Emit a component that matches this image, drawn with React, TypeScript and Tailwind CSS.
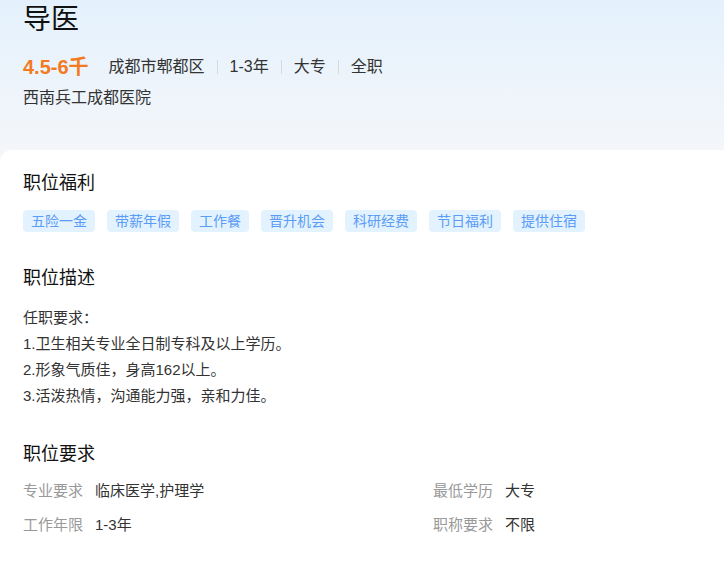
const font = { fontFamily: '"Liberation Sans", Arial, "Noto Sans CJK SC", sans-serif' };

const tags = ['五险一金', '带薪年假', '工作餐', '晋升机会', '科研经费', '节日福利', '提供住宿'];

const meta = ['成都市郫都区', '1-3年', '大专', '全职'];

function Heading({ children }: { children: React.ReactNode }) {
  return <h2 className="text-[18px] leading-[26px] text-[#111] font-normal">{children}</h2>;
}

function Field({ label, value }: { label: string; value: string }) {
  return (
    <div className="flex items-center gap-[12px] text-[15px] leading-[20px]">
      <span className="text-[#999]">{label}</span>
      <span className="text-[#333]">{value}</span>
    </div>
  );
}

export default function App() {
  return (
    <div className="min-h-[571px] w-full bg-white" style={font}>
      <div className="bg-gradient-to-b from-[#e4f1fd] to-[#f4f6f9]">
        <div className="h-[150px] px-[23px] pt-[2px]">
          <h1 className="text-[28px] leading-[36px] text-[#111] font-normal">导医</h1>
          <div className="mt-[15px] flex items-center h-[28px]">
            <span className="text-[20px] font-bold text-[#f27b1f] mr-[20px]">4.5-6千</span>
            {meta.map((m, i) => (
              <div key={m} className="flex items-center">
                {i > 0 && <span className="w-px h-[14px] bg-[#d6d9de] mx-[12px]" />}
                <span className="text-[16px] text-[#333]">{m}</span>
              </div>
            ))}
          </div>
          <div className="mt-[5px] text-[16px] leading-[24px] text-[#333]">西南兵工成都医院</div>
        </div>
      </div>
      <div className="bg-[#f4f6f9]">
        <div className="bg-white rounded-tl-[12px] px-[23px] pt-[20px] pb-[30px]">
          <Heading>职位福利</Heading>
          <div className="mt-[14px] flex flex-wrap gap-[12px]">
            {tags.map((t) => (
              <span
                key={t}
                className="h-[22px] leading-[22px] px-[8px] rounded-[4px] bg-[#e3f2ff] text-[#5a9cf6] text-[14px]"
              >
                {t}
              </span>
            ))}
          </div>

          <div className="mt-[33px]">
            <Heading>职位描述</Heading>
          </div>
          <div className="mt-[14px] text-[15px] leading-[26px] text-[#333]">
            <p>任职要求：</p>
            <p>1.卫生相关专业全日制专科及以上学历。</p>
            <p>2.形象气质佳，身高162以上。</p>
            <p>3.活泼热情，沟通能力强，亲和力佳。</p>
          </div>

          <div className="mt-[32px]">
            <Heading>职位要求</Heading>
          </div>
          <div className="mt-[14px] grid grid-cols-[410px_1fr] gap-y-[14px]">
            <Field label="专业要求" value="临床医学,护理学" />
            <Field label="最低学历" value="大专" />
            <Field label="工作年限" value="1-3年" />
            <Field label="职称要求" value="不限" />
          </div>
        </div>
      </div>
    </div>
  );
}
